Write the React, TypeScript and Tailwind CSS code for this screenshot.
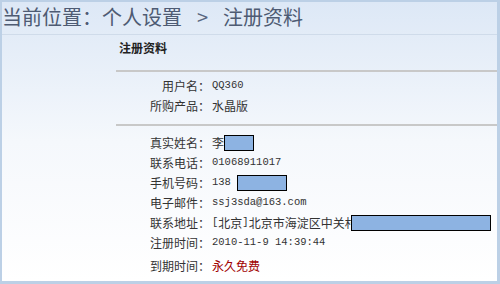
function Mask({ className = '' }: { className?: string }) {
  return <span className={`inline-block h-[16px] border border-black bg-[#8db3e2] ${className}`} />;
}

function Row({ label, children }: { label: string; children: React.ReactNode }) {
  return (
    <div className="flex h-[20px] items-center">
      <div className="w-[208px] shrink-0 text-right font-['Noto_Sans_CJK_SC',sans-serif] text-[12px] text-[#333]">
        {label}：
      </div>
      <div className="flex items-center pl-[2px] font-['Liberation_Mono','Noto_Sans_CJK_SC',monospace] text-[10.5px] text-[#333]">
        {children}
      </div>
    </div>
  );
}

const cjk = "font-['Noto_Sans_CJK_SC',sans-serif] text-[12px]";

export default function App() {
  return (
    <div className="h-[284px] w-[500px] overflow-hidden border-t-2 border-l-2 border-r-[3px] border-b-[3px] border-[#bcd0e6] bg-gradient-to-b from-[#dde8f6] via-[#f5f8fc] to-white">
      <div className="flex h-[33px] items-center border-b border-[#cfdbea] pb-[2px] font-['Noto_Sans_CJK_SC',sans-serif] text-[20px] text-[#4e5b73]">
        当前位置：个人设置<span className="mx-[15px] text-[#5a6780]">&gt;</span>注册资料
      </div>
      <div className="pl-[114px]">
        <div className="pt-[4px] pb-[13px] pl-[3px] font-['Noto_Sans_CJK_SC',sans-serif] text-[12px] font-bold text-[#222]">
          注册资料
        </div>
        <div className="h-[2px] bg-[#c8c8c8]" />
      </div>
      <div className="pt-[4px] pb-[8px]">
        <Row label="用户名">QQ360</Row>
        <Row label="所购产品"><span className={cjk}>水晶版</span></Row>
      </div>
      <div className="pl-[114px]">
        <div className="h-[2px] bg-[#c8c8c8]" />
      </div>
      <div className="pt-[7px]">
        <Row label="真实姓名"><span className={cjk}>李</span><Mask className="w-[30px]" /></Row>
        <Row label="联系电话">01068911017</Row>
        <Row label="手机号码">138<Mask className="ml-[6px] w-[50px]" /></Row>
        <Row label="电子邮件">ssj3sda@163.com</Row>
        <Row label="联系地址">
          [<span className={cjk}>北京</span>]<span className={cjk}>北京市海淀区中关村</span>
          <Mask className="-ml-[6px] w-[140px]" />
        </Row>
        <Row label="注册时间">2010-11-9 14:39:44</Row>
        <div className="pt-[3px]">
          <Row label="到期时间"><span className={`${cjk} text-[#a00000]`}>永久免费</span></Row>
        </div>
      </div>
    </div>
  );
}
